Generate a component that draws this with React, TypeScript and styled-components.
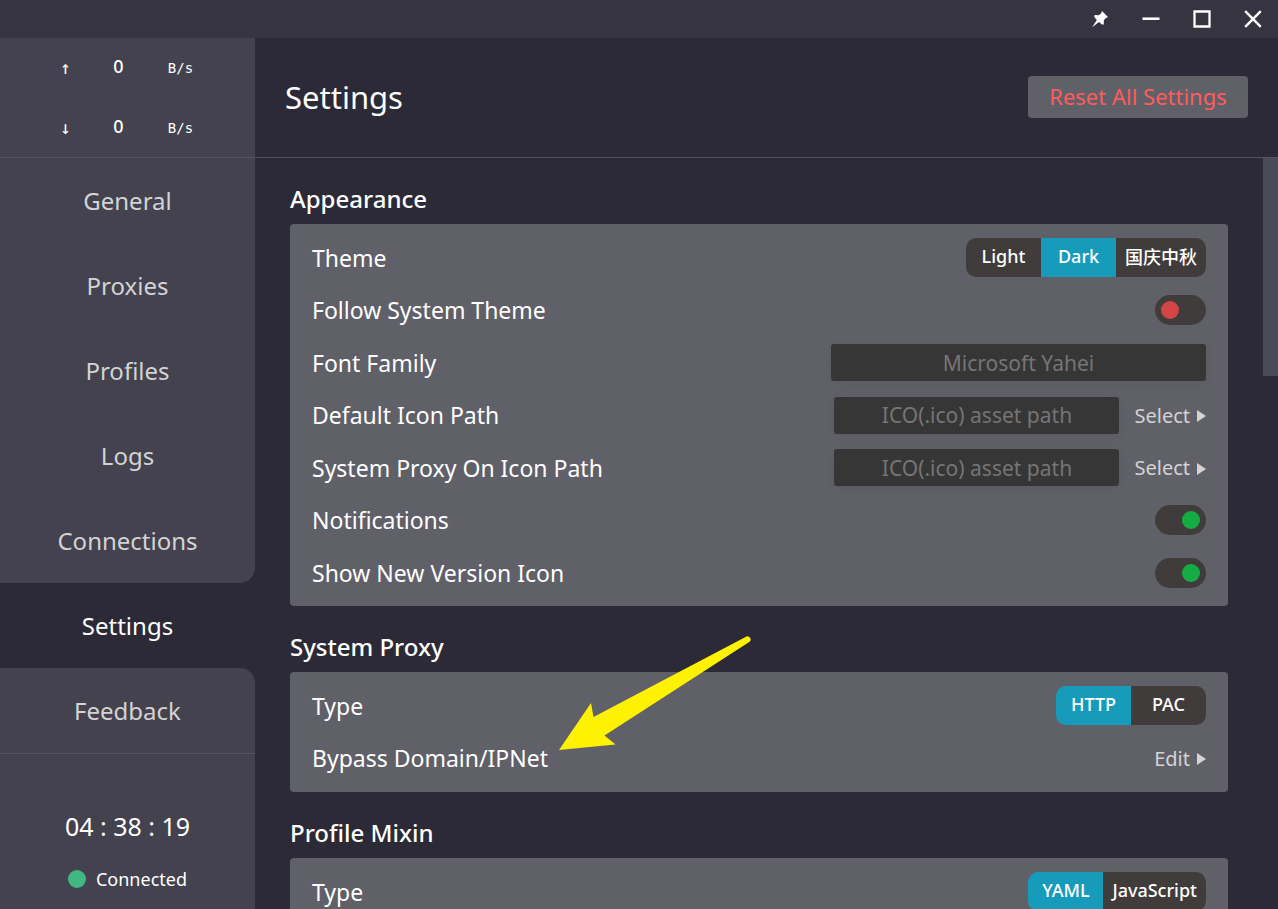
import React, { useState } from "react";
import styled, { createGlobalStyle } from "styled-components";

const GlobalStyle = createGlobalStyle`
  *, *::before, *::after { box-sizing: border-box; }
  body {
    margin: 0;
    background: #2c2a37;
    color: #fff;
    font-family: "Noto Sans", "Noto Sans CJK SC", sans-serif;
  }
  button, input { font-family: inherit; }
  button { cursor: pointer; }
`;

const Window = styled.div`
  display: flex;
  flex-direction: column;
  height: 100vh;
  overflow: hidden;
`;

const TitleBar = styled.header`
  display: flex;
  flex: none;
  justify-content: flex-end;
  height: 38px;
  background: #363441;
`;

const WindowButton = styled.button`
  display: flex;
  align-items: center;
  justify-content: center;
  width: 51px;
  padding: 0;
  border: 0;
  background: none;
  color: #fff;
`;

const Body = styled.div`
  display: flex;
  flex: 1;
  min-height: 0;
`;

const Sidebar = styled.aside`
  display: flex;
  flex: none;
  flex-direction: column;
  width: 255px;
  background: #2c2a37;
`;

const Traffic = styled.div`
  flex: none;
  height: 120px;
  border-bottom: 1px solid #54525a;
  background: #43424e;
`;

const TrafficRow = styled.div`
  display: grid;
  grid-template-columns: 54px 52px 72px;
  align-items: center;
  justify-content: center;
  height: 60px;
  font-family: "DejaVu Sans Mono", monospace;
  font-size: 14px;
  line-height: 22px;
  text-align: center;
`;

const TrafficArrow = styled.span`
  font-size: 18px;
`;

const TrafficValue = styled.span`
  padding-bottom: 5px;
  font-family: "Noto Sans", sans-serif;
  font-size: 18px;
  font-weight: 500;
`;

const Nav = styled.nav`
  display: flex;
  flex: none;
  flex-direction: column;
`;

const NavLink = styled.a<{ $state?: "active" | "before" | "after" }>`
  display: flex;
  align-items: center;
  justify-content: center;
  height: 85px;
  background: ${(p) => (p.$state === "active" ? "#2c2a37" : "#43424e")};
  border-radius: ${(p) =>
    p.$state === "before" ? "0 0 15px 0" : p.$state === "after" ? "0 15px 0 0" : "0"};
  color: ${(p) => (p.$state === "active" ? "#fff" : "#d3d3d3")};
  font-size: 24px;
  text-decoration: none;
`;

const Status = styled.div`
  display: flex;
  flex: 1;
  flex-direction: column;
  align-items: center;
  padding-top: 53px;
  border-top: 1px solid #54525a;
  background: #43424e;
`;

const Clock = styled.div`
  font-size: 25px;
  line-height: 38px;
`;

const Connection = styled.div`
  display: flex;
  align-items: center;
  gap: 10px;
  margin-top: 19px;
  font-size: 18px;
  line-height: 30px;
`;

const Dot = styled.span`
  width: 18px;
  height: 18px;
  border-radius: 50%;
  background: #41b883;
`;

const Main = styled.main`
  display: flex;
  flex: 1;
  flex-direction: column;
  min-width: 0;
`;

const PageHeader = styled.div`
  display: flex;
  flex: none;
  align-items: center;
  justify-content: space-between;
  height: 120px;
  padding: 0 30px 2px;
  border-bottom: 1px solid #54525a;
`;

const PageTitle = styled.h1`
  margin: 0;
  font-size: 31px;
  font-weight: 400;
`;

const ResetButton = styled.button`
  width: 220px;
  height: 42px;
  padding: 0 0 2px;
  border: 0;
  border-radius: 4px;
  background: #606069;
  color: #ff5c5c;
  font-size: 22px;
`;

const ScrollArea = styled.div`
  display: flex;
  flex: 1;
  min-height: 0;
`;

const Content = styled.div`
  flex: 1;
  min-width: 0;
  padding: 0 35px;
  overflow: hidden;
`;

const ScrollTrack = styled.div`
  flex: none;
  width: 15px;
`;

const ScrollThumb = styled.div`
  height: 29%;
  background: #4b4a57;
`;

const SectionTitle = styled.h2`
  height: 66px;
  margin: 0;
  padding-top: 23px;
  font-size: 24px;
  font-weight: 500;
  line-height: 36px;
`;

const Card = styled.div`
  min-height: 120px;
  padding: 7px 22px;
  border-radius: 4px;
  background: #606069;
`;

const Row = styled.div`
  position: relative;
  display: flex;
  align-items: center;
  justify-content: space-between;
  height: 53px;

  &:nth-child(even) {
    height: 52px;
  }
`;

const RowLabel = styled.label`
  font-size: 23px;
  line-height: 32px;
`;

const Segments = styled.div`
  display: flex;
  height: 39px;
  border-radius: 10px;
  overflow: hidden;
`;

const Segment = styled.button<{ $active: boolean }>`
  min-width: 75px;
  padding: 0 9px 3px;
  border: 0;
  background: ${(p) => (p.$active ? "#179bbb" : "#403c3b")};
  color: #fff;
  font-size: 18px;
  font-weight: 500;
`;

const Switch = styled.input`
  appearance: none;
  display: flex;
  align-items: center;
  width: 51px;
  height: 30px;
  margin: 0;
  padding: 0 6px;
  border-radius: 15px;
  background: #403c3b;
  cursor: pointer;

  &::before {
    content: "";
    width: 18px;
    height: 18px;
    border-radius: 50%;
    background: #d44545;
  }
  &:checked {
    justify-content: flex-end;
  }
  &:checked::before {
    background: #15ad43;
  }
`;

const Field = styled.input<{ $wide?: boolean }>`
  width: ${(p) => (p.$wide ? "375px" : "285px")};
  height: 37px;
  padding: 0;
  border: 0;
  border-radius: 3px;
  background: #363636;
  box-shadow: 0 2px 12px rgba(0, 0, 0, 0.06);
  color: #fff;
  font-size: 21px;
  text-align: center;

  &::placeholder {
    color: #757575;
  }
`;

const Controls = styled.div`
  display: flex;
  align-items: center;
  gap: 15px;
`;

const LinkButton = styled.button`
  display: flex;
  align-items: center;
  gap: 7px;
  padding: 0;
  border: 0;
  background: none;
  color: #d3d3d3;
  font-size: 20px;
`;

const Caret = styled.span`
  margin-top: 2px;
  border: solid transparent;
  border-width: 6px 0 6px 9px;
  border-left-color: #d3d3d3;
`;

const Pointer = styled.svg`
  position: absolute;
  top: -97px;
  left: 247px;
  pointer-events: none;
`;

function SegmentedControl({ options, initial }: { options: string[]; initial: string }) {
  const [value, setValue] = useState(initial);
  return (
    <Segments>
      {options.map((option) => (
        <Segment
          key={option}
          type="button"
          $active={option === value}
          aria-pressed={option === value}
          onClick={() => setValue(option)}
        >
          {option}
        </Segment>
      ))}
    </Segments>
  );
}

function SwitchRow({ id, label, on }: { id: string; label: string; on?: boolean }) {
  return (
    <Row>
      <RowLabel htmlFor={id}>{label}</RowLabel>
      <Switch id={id} type="checkbox" defaultChecked={on} />
    </Row>
  );
}

function PathRow({ id, label }: { id: string; label: string }) {
  return (
    <Row>
      <RowLabel htmlFor={id}>{label}</RowLabel>
      <Controls>
        <Field id={id} type="text" placeholder="ICO(.ico) asset path" />
        <LinkButton type="button">
          Select
          <Caret />
        </LinkButton>
      </Controls>
    </Row>
  );
}

export default function App() {
  return (
    <Window>
      <GlobalStyle />
      <TitleBar>
        <WindowButton type="button" aria-label="Pin window">
          <svg width="18" height="18" viewBox="0 0 18 18" fill="currentColor">
            <path d="M11 1 L17 7 L14.2 8.6 L12.8 10.4 L12.8 14.6 L11 14.6 L8 12 L1.2 17.2 L5.8 10 L3.2 6.8 L3.7 5 L7.8 5.2 L10 3.6 Z" />
          </svg>
        </WindowButton>
        <WindowButton type="button" aria-label="Minimize">
          <svg width="18" height="18" viewBox="0 0 18 18">
            <path d="M0.5 8.7H17.5" stroke="currentColor" strokeWidth="2.6" />
          </svg>
        </WindowButton>
        <WindowButton type="button" aria-label="Maximize">
          <svg width="18" height="18" viewBox="0 0 18 18">
            <path d="M1.5 1.5H16.5V16.5H1.5Z" fill="none" stroke="currentColor" strokeWidth="2.3" />
          </svg>
        </WindowButton>
        <WindowButton type="button" aria-label="Close">
          <svg width="18" height="18" viewBox="0 0 18 18">
            <path d="M1.2 1.2L16.8 16.8M16.8 1.2L1.2 16.8" stroke="currentColor" strokeWidth="2.4" />
          </svg>
        </WindowButton>
      </TitleBar>
      <Body>
        <Sidebar>
          <Traffic>
            <TrafficRow>
              <TrafficArrow>↑</TrafficArrow>
              <TrafficValue>0</TrafficValue>
              <span>B/s</span>
            </TrafficRow>
            <TrafficRow>
              <TrafficArrow>↓</TrafficArrow>
              <TrafficValue>0</TrafficValue>
              <span>B/s</span>
            </TrafficRow>
          </Traffic>
          <Nav>
            <NavLink href="#general">General</NavLink>
            <NavLink href="#proxies">Proxies</NavLink>
            <NavLink href="#profiles">Profiles</NavLink>
            <NavLink href="#logs">Logs</NavLink>
            <NavLink href="#connections" $state="before">Connections</NavLink>
            <NavLink href="#settings" $state="active" aria-current="page">Settings</NavLink>
            <NavLink href="#feedback" $state="after">Feedback</NavLink>
          </Nav>
          <Status>
            <Clock>04 : 38 : 19</Clock>
            <Connection>
              <Dot />
              Connected
            </Connection>
          </Status>
        </Sidebar>
        <Main>
          <PageHeader>
            <PageTitle>Settings</PageTitle>
            <ResetButton type="button">Reset All Settings</ResetButton>
          </PageHeader>
          <ScrollArea>
            <Content>
              <SectionTitle>Appearance</SectionTitle>
              <Card>
                <Row>
                  <RowLabel as="span">Theme</RowLabel>
                  <SegmentedControl options={["Light", "Dark", "国庆中秋"]} initial="Dark" />
                </Row>
                <SwitchRow id="follow-system" label="Follow System Theme" />
                <Row>
                  <RowLabel htmlFor="font-family">Font Family</RowLabel>
                  <Field id="font-family" type="text" placeholder="Microsoft Yahei" $wide />
                </Row>
                <PathRow id="default-icon" label="Default Icon Path" />
                <PathRow id="proxy-icon" label="System Proxy On Icon Path" />
                <SwitchRow id="notifications" label="Notifications" on />
                <SwitchRow id="version-icon" label="Show New Version Icon" on />
              </Card>
              <SectionTitle>System Proxy</SectionTitle>
              <Card>
                <Row>
                  <RowLabel as="span">Type</RowLabel>
                  <SegmentedControl options={["HTTP", "PAC"]} initial="HTTP" />
                </Row>
                <Row>
                  <RowLabel as="span">Bypass Domain/IPNet</RowLabel>
                  <LinkButton type="button">
                    Edit
                    <Caret />
                  </LinkButton>
                  <Pointer width="192" height="115" viewBox="0 0 192 115" aria-hidden="true">
                    <path
                      d="M0 115L32 68L34.5 82L187.5 1.4A3.2 3.2 0 0 1 190.6 6.8L45.5 100.5L56.5 109.5Z"
                      fill="#fff200"
                    />
                  </Pointer>
                </Row>
              </Card>
              <SectionTitle>Profile Mixin</SectionTitle>
              <Card>
                <Row>
                  <RowLabel as="span">Type</RowLabel>
                  <SegmentedControl options={["YAML", "JavaScript"]} initial="YAML" />
                </Row>
              </Card>
            </Content>
            <ScrollTrack>
              <ScrollThumb />
            </ScrollTrack>
          </ScrollArea>
        </Main>
      </Body>
    </Window>
  );
}
